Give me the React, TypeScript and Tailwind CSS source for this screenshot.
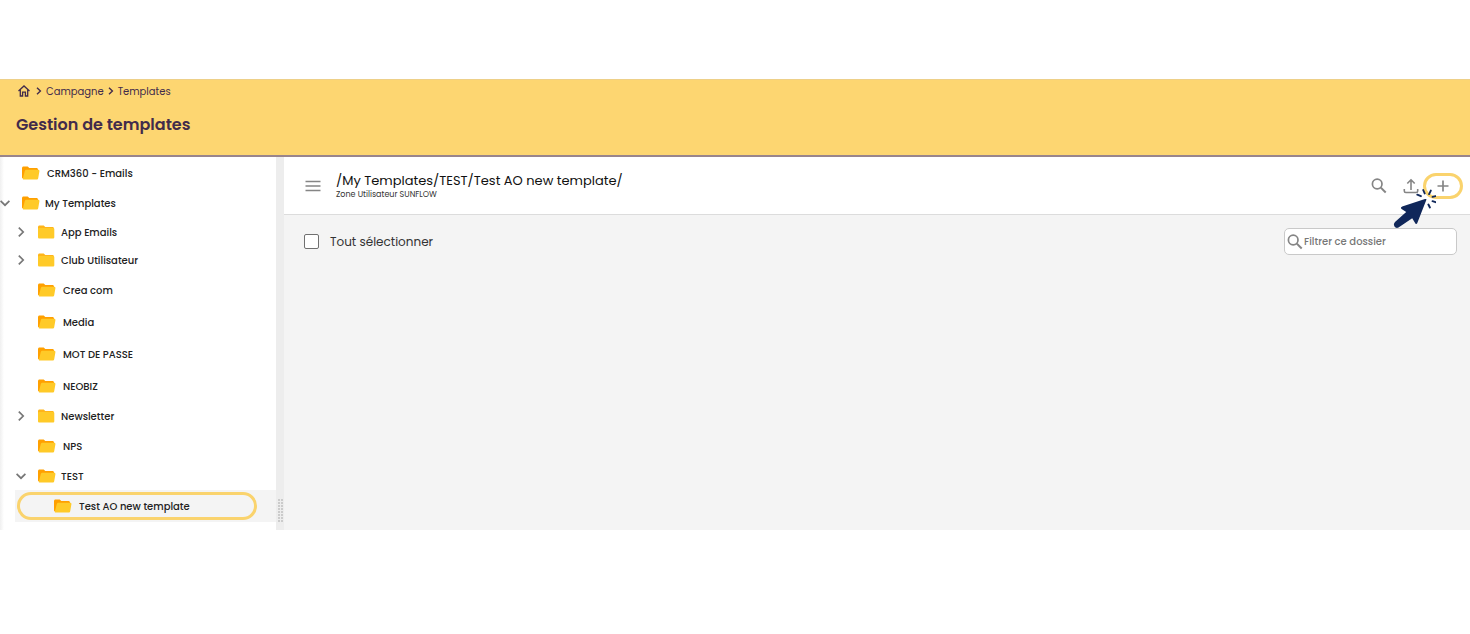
import React, { useState } from 'react';

interface Folder {
  name: string;
  depth: number;
  state: 'leaf' | 'closed' | 'open';
}

const FOLDERS: Folder[] = [
  { name: 'CRM360 - Emails', depth: 0, state: 'leaf' },
  { name: 'My Templates', depth: 0, state: 'open' },
  { name: 'App Emails', depth: 1, state: 'closed' },
  { name: 'Club Utilisateur', depth: 1, state: 'closed' },
  { name: 'Crea com', depth: 1, state: 'leaf' },
  { name: 'Media', depth: 1, state: 'leaf' },
  { name: 'MOT DE PASSE', depth: 1, state: 'leaf' },
  { name: 'NEOBIZ', depth: 1, state: 'leaf' },
  { name: 'Newsletter', depth: 1, state: 'closed' },
  { name: 'NPS', depth: 1, state: 'leaf' },
  { name: 'TEST', depth: 1, state: 'open' },
  { name: 'Test AO new template', depth: 2, state: 'leaf' },
];

const INDENT = ['pl-0', 'pl-4', 'pl-8'];

const FolderIcon: React.FC<{ open: boolean }> = ({ open }) => (
  <svg viewBox="0 0 18 14" className="h-3.5 w-[18px] shrink-0" aria-hidden="true">
    {open ? (
      <>
        <path d="M1.5.5h4.2l1.6 1.6h7.2c.8 0 1.5.7 1.5 1.5v8.9H1.5C.7 12.5 0 12 0 11.5V2C0 1.1.7.5 1.5.5z" fill="#ffa000" />
        <path d="M4.6 3.8h11.6c.9 0 1.400.6 1.200 1.500l-1.200 6.900c-.1.800-.8 1.400-1.600 1.400H1.600c-.6 0-.9-.4-.7-1l1.900-7.500c.2-.8.900-1.300 1.800-1.300z" fill="#ffca28" />
      </>
    ) : (
      <>
        <path d="M1.5.5h4.2l1.6 1.6h7.200c.8 0 1.500.7 1.500 1.500v4H0V2C0 1.100.7.5 1.500.5z" fill="#ffb51a" />
        <path d="M1.300 2.900H15c.8 0 1.300.5 1.300 1.300v8c0 .8-.6 1.400-1.400 1.400H1.400C.6 13.600 0 13 0 12.200v-8c0-.8.5-1.300 1.300-1.300z" fill="#ffca28" />
      </>
    )}
  </svg>
);

const Chevron: React.FC<{ down?: boolean }> = ({ down }) => (
  <svg viewBox="0 0 10 10" className="h-2.5 w-2.5" fill="none" stroke="#777" strokeWidth="1.7" aria-hidden="true">
    <path d={down ? 'M.6 2.8 5 7.2l4.4-4.4' : 'M2.8.6 7.2 5 2.8 9.4'} />
  </svg>
);

const CrumbSeparator: React.FC = () => (
  <svg viewBox="0 0 8 8" className="h-2 w-2" fill="none" stroke="currentColor" strokeWidth="1.4" aria-hidden="true">
    <path d="m2 .8 3.4 3.2L2 7.2" />
  </svg>
);

const SearchIcon: React.FC = () => (
  <svg viewBox="0 0 16 16" className="h-4 w-4 shrink-0" fill="none" stroke="#858585" aria-hidden="true">
    <circle cx="6.2" cy="6" r="4.8" strokeWidth="1.7" />
    <path d="m9.800 9.600 4.900 4.900" strokeWidth="2" />
  </svg>
);

const ClickPointer: React.FC = () => (
  <svg viewBox="0 0 44 40" className="pointer-events-none absolute -bottom-[30px] right-[27px] h-10 w-11" aria-hidden="true">
    <path
      d="M34.5 10.500 25.200 34.200Q24.400 35.500 23.400 34.400L20.200 29.300 6.500 38.600Q3.800 39.600 2.300 37.300.9 34.900 3 32.900L14.200 23 9.200 19.800Q8.200 18.200 10.200 17.500L33 10Q34.600 9.600 34.500 10.500z"
      fill="#10275a"
    />
    <path
      d="m25.300 5.700 3.600 1.500M31.200 1l1.500 3.500M38.800 1.600l-1.700 3.500M40.600 7.900l3-.8M40.500 12.200l3 1M36.400 15.500l1.500 3"
      fill="none"
      stroke="#10275a"
      strokeWidth="1.9"
      strokeLinecap="round"
    />
  </svg>
);

const PageHeader: React.FC = () => (
  <header className="h-[78px] border-t border-b-2 border-t-[#eed088] border-b-[#99858c] bg-[#fdd671] pl-4 text-[#422b4b]">
    <nav aria-label="Fil d'Ariane" className="flex h-[22px] items-center gap-[3px] pl-0.5 text-[10px]">
      <a href="#accueil" aria-label="Accueil" className="mr-0.5">
        <svg viewBox="0 0 12 12" className="h-3 w-3" fill="none" stroke="currentColor" strokeWidth="1.3" aria-hidden="true">
          <path d="M.5 6 6 1l5.500 5M2.300 4.700v6.300h2.300V7.200h2.800V11h2.300V4.700" />
        </svg>
      </a>
      <CrumbSeparator />
      <a href="#campagne">Campagne</a>
      <CrumbSeparator />
      <a href="#templates">Templates</a>
    </nav>
    <h1 className="mt-3 text-[16px] leading-[22px] font-semibold">Gestion de templates</h1>
  </header>
);

const FolderTree: React.FC = () => {
  const [selected, setSelected] = useState('Test AO new template');

  return (
    <ul className="w-[276px] shrink-0 bg-linear-to-r from-[#f0f0f0] to-white to-[4px] pt-px pb-2 text-[10px] font-medium text-[#222]">
      {FOLDERS.map(({ name, depth, state }) => {
        const active = selected === name;
        const height = depth === 0 ? 'h-[30px]' : state === 'leaf' ? 'h-8' : 'h-7';
        return (
          <li key={name} className={`relative flex items-center ${height} ${INDENT[depth]}`}>
            {active && <div className="absolute inset-y-0 right-0 left-[15px] bg-[#f4f4f4]" />}
            {active && <div className="absolute inset-y-0.5 right-[19px] left-[17px] rounded-full border-3 border-[#fad36d]" />}
            <div className="relative flex w-[22px] shrink-0 items-center">
              {state !== 'leaf' && (
                <button type="button" aria-label={`Basculer ${name}`}>
                  <Chevron down={state === 'open'} />
                </button>
              )}
            </div>
            <button
              type="button"
              onClick={() => setSelected(name)}
              className={`relative flex items-center text-left ${state === 'leaf' ? 'gap-[7px]' : 'gap-[5px]'}`}
            >
              <FolderIcon open={state !== 'closed'} />
              {name}
            </button>
          </li>
        );
      })}
    </ul>
  );
};

const Splitter: React.FC = () => (
  <div className="flex w-2 shrink-0 items-end justify-center bg-[#ededed] pb-2">
    <div className="grid grid-cols-2 gap-px">
      {Array.from({ length: 16 }, (_, i) => (
        <div key={i} className="h-0.5 w-0.5 bg-[#cbcbcb]" />
      ))}
    </div>
  </div>
);

const Toolbar: React.FC = () => (
  <div className="flex h-[58px] items-center justify-between border-b border-[#dcdcdc] bg-white pr-[7px] pl-[21px]">
    <div className="flex items-center gap-[15px]">
      <button type="button" aria-label="Menu">
        <svg viewBox="0 0 16 12" className="h-3 w-4" stroke="#858585" strokeWidth="1.5" aria-hidden="true">
          <path d="M.5 1.500h15M.5 6h15M.5 10.500h15" />
        </svg>
      </button>
      <div>
        <h2 className="text-[13px] leading-[18px] text-[#111]">/My Templates/TEST/Test AO new template/</h2>
        <p className="text-[8px] leading-[10px] text-[#333]">Zone Utilisateur SUNFLOW</p>
      </div>
    </div>
    <div className="relative flex items-center">
      <button type="button" aria-label="Rechercher" className="mr-4">
        <SearchIcon />
      </button>
      <button type="button" aria-label="Importer" className="mr-1">
        <svg viewBox="0 0 16 16" className="h-4 w-4" fill="none" stroke="#858585" strokeWidth="1.6" aria-hidden="true">
          <path d="M8 12V2M4.300 5.500 8 1.800l3.700 3.700M1.300 11v2q0 1.500 1.500 1.500h10.400q1.500 0 1.500-1.500V11" />
        </svg>
      </button>
      <button
        type="button"
        aria-label="Ajouter"
        className="flex h-[26px] w-10 items-center justify-center rounded-full border-3 border-[#fad36d]"
      >
        <svg viewBox="0 0 12 12" className="h-3 w-3" stroke="#858585" strokeWidth="1.7" aria-hidden="true">
          <path d="M6 .5v11M.5 6h11" />
        </svg>
      </button>
      <ClickPointer />
    </div>
  </div>
);

const FilterBar: React.FC = () => (
  <div className="flex items-center justify-between pt-[13px] pr-[13px] pl-5">
    <label className="flex items-center gap-[11px] text-[12px] text-[#333]">
      <input type="checkbox" className="h-[15px] w-[15px] appearance-none rounded-xs border border-[#707070] bg-white checked:bg-[#fdd671]" />
      Tout sélectionner
    </label>
    <label className="flex h-[27px] w-[173px] items-center gap-px rounded-[5px] border border-[#c9c9c9] bg-white pl-0.5">
      <SearchIcon />
      <input
        type="text"
        aria-label="Filtrer ce dossier"
        placeholder="Filtrer ce dossier"
        className="w-full min-w-0 text-[10px] font-medium outline-none placeholder:text-[#777]"
      />
    </label>
  </div>
);

export default function App() {
  return (
    <div className="min-h-screen bg-white pt-[79px] font-['Poppins','Inter',sans-serif]">
      <PageHeader />
      <div className="flex">
        <FolderTree />
        <Splitter />
        <main className="min-w-0 flex-1 bg-[#f4f4f4]">
          <Toolbar />
          <FilterBar />
        </main>
      </div>
    </div>
  );
}
